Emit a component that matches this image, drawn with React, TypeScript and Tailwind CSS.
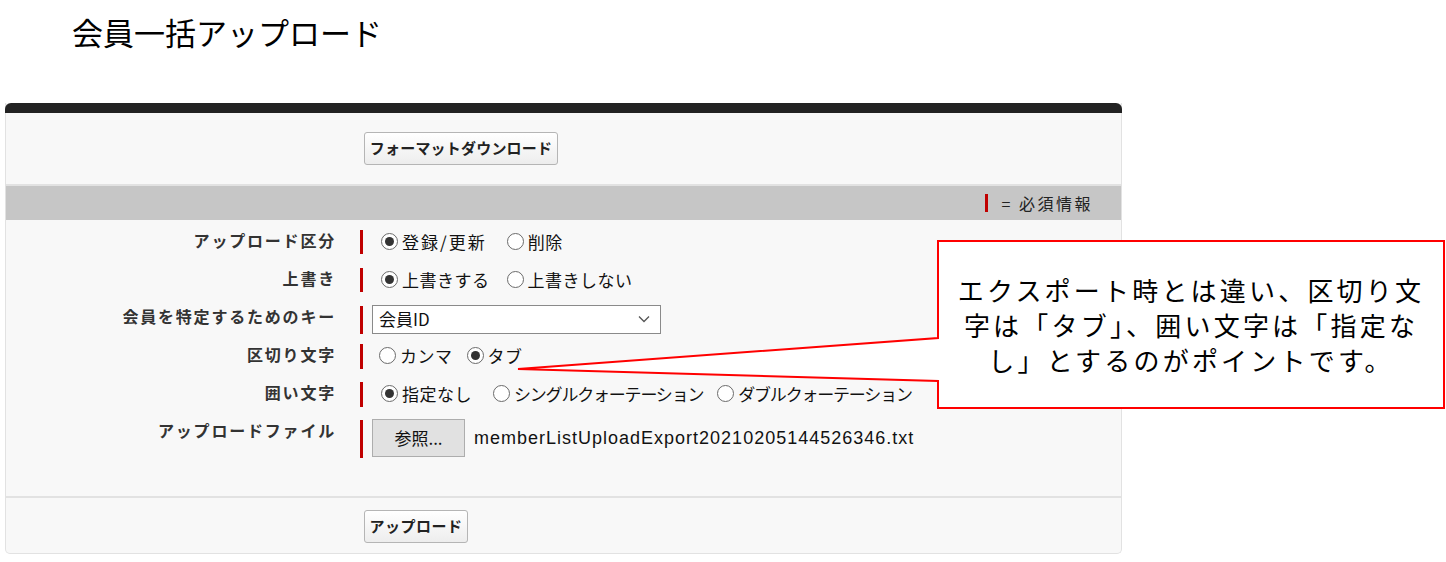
import React from "react";

const JP = "font-['Noto_Sans_CJK_JP','Noto_Sans',sans-serif]";

function Radio({ checked }: { checked?: boolean }) {
  return (
    <span className="inline-flex w-[17px] h-[17px] shrink-0 rounded-full border border-[#6b6b6b] bg-white items-center justify-center">
      {checked && <span className="w-[9px] h-[9px] rounded-full bg-[#333]" />}
    </span>
  );
}

function Opt({
  checked,
  label,
  gap = "ml-[0px]",
  track = "tracking-[0.5px]",
}: {
  checked?: boolean;
  label: string;
  gap?: string;
  track?: string;
}) {
  return (
    <span className={`inline-flex items-center ${gap}`}>
      <Radio checked={checked} />
      <span className={`ml-[4px] text-[17px] text-[#111] leading-none ${track}`}>{label}</span>
    </span>
  );
}

function Row({ label, h, children, barH }: { label: string; h: string; barH: string; children: React.ReactNode }) {
  return (
    <div className={`flex items-start ${h}`}>
      <div className="w-[330px] text-right text-[16px] font-bold text-[#333] tracking-[1.8px] leading-[22px]">
        {label}
      </div>
      <div className={`ml-[24px] w-[3px] ${barH} bg-[#c00000] mt-[1px]`} />
      <div className={`ml-[9px] flex items-center ${barH}`}>{children}</div>
    </div>
  );
}

export default function App() {
  return (
    <div className={`relative w-[1446px] h-[562px] bg-white overflow-hidden ${JP}`}>
      <div className="h-[103px] pl-[72px] pt-[12px]">
        <h1 className="text-[31px] leading-[40px] text-black font-normal">会員一括アップロード</h1>
      </div>

      <div className="ml-[5px] w-[1117px] rounded-b-[5px] border-x border-b border-[#e2e2e2] bg-[#f8f8f8]">
        <div className="h-[10px] -mx-px bg-[#222] rounded-t-[6px]" />
        <div className="h-[71px] pt-[19px] pl-[358px]">
          <button className="h-[33px] w-[194px] rounded-[3px] border border-[#b5b5b5] bg-gradient-to-b from-white to-[#ededed] text-[15px] font-bold text-[#222] tracking-[0.2px]">
            フォーマットダウンロード
          </button>
        </div>
        <div className="h-[2px] bg-[#e2e2e2]" />
        <div className="h-[34px] bg-[#c6c6c6] flex items-center justify-end pr-[28px]">
          <span className="w-[3px] h-[18px] bg-[#c00000]" />
          <span className="ml-[14px] text-[16px] text-[#222] tracking-[2.5px]">= 必須情報</span>
        </div>

        <div className="pt-[9px] pb-[37px]">
          <Row label="アップロード区分" h="h-[38px]" barH="h-[24px]">
            <span className="pl-[9px] flex items-center">
              <Opt checked label="登録/更新" track="tracking-[2px]" />
              <Opt label="削除" gap="ml-[20px]" />
            </span>
          </Row>
          <Row label="上書き" h="h-[38px]" barH="h-[24px]">
            <span className="pl-[9px] flex items-center">
              <Opt checked label="上書きする" />
              <Opt label="上書きしない" gap="ml-[17px]" />
            </span>
          </Row>
          <Row label="会員を特定するためのキー" h="h-[38px]" barH="h-[28px]">
            <div className="w-[289px] h-[29px] bg-white border border-[#8a8a8a] flex items-center justify-between pl-[6px] pr-[10px]">
              <span className="text-[17px] text-[#111]">会員ID</span>
              <svg width="12" height="8" viewBox="0 0 12 8" fill="none">
                <path d="M1 1.5 L6 6.5 L11 1.5" stroke="#555" strokeWidth="1.3" />
              </svg>
            </div>
          </Row>
          <Row label="区切り文字" h="h-[38px]" barH="h-[25px]">
            <span className="pl-[7px] flex items-center">
              <Opt label="カンマ" />
              <Opt checked label="タブ" gap="ml-[14px]" />
            </span>
          </Row>
          <Row label="囲い文字" h="h-[38px]" barH="h-[25px]">
            <span className="pl-[9px] flex items-center">
              <Opt checked label="指定なし" />
              <Opt label="シングルクォーテーション" gap="ml-[21px]" track="tracking-[-1.2px]" />
              <Opt label="ダブルクォーテーション" gap="ml-[14px]" track="tracking-[-1.2px]" />
            </span>
          </Row>
          <Row label="アップロードファイル" h="h-[40px]" barH="h-[38px]">
            <span className="flex items-center">
              <span className="w-[93px] h-[38px] bg-[#e1e1e1] border border-[#adadad] flex items-center justify-center text-[17px] text-[#111]">
                参照...
              </span>
              <span className="ml-[9px] text-[18px] text-[#111] font-['Liberation_Sans',sans-serif] tracking-[1px]">
                memberListUploadExport20210205144526346.txt
              </span>
            </span>
          </Row>
        </div>

        <div className="h-[2px] bg-[#e2e2e2]" />
        <div className="h-[55px] pt-[12px] pl-[358px]">
          <button className="h-[33px] w-[104px] rounded-[3px] border border-[#b5b5b5] bg-gradient-to-b from-white to-[#ededed] text-[15px] font-bold text-[#222] tracking-[0.5px]">
            アップロード
          </button>
        </div>
      </div>

      <svg className="absolute left-0 top-0 pointer-events-none" width="1446" height="562">
        <path
          d="M938 241 H1444 V408 H938 V381 L518 369 L938 338 Z"
          fill="white"
          stroke="#ff0000"
          strokeWidth="2"
          strokeLinejoin="miter"
        />
      </svg>
      <div className="absolute left-[938px] top-[241px] w-[506px] h-[167px] flex flex-col items-center justify-center text-[26px] tracking-[3.2px] text-black">
        <div className="h-[35px] leading-[35px] whitespace-nowrap">エクスポート時とは違い、区切り文</div>
        <div className="h-[35px] leading-[35px] whitespace-nowrap">字は「タブ」、囲い文字は「指定な</div>
        <div className="h-[35px] leading-[35px] whitespace-nowrap">し」とするのがポイントです。</div>
      </div>
    </div>
  );
}
